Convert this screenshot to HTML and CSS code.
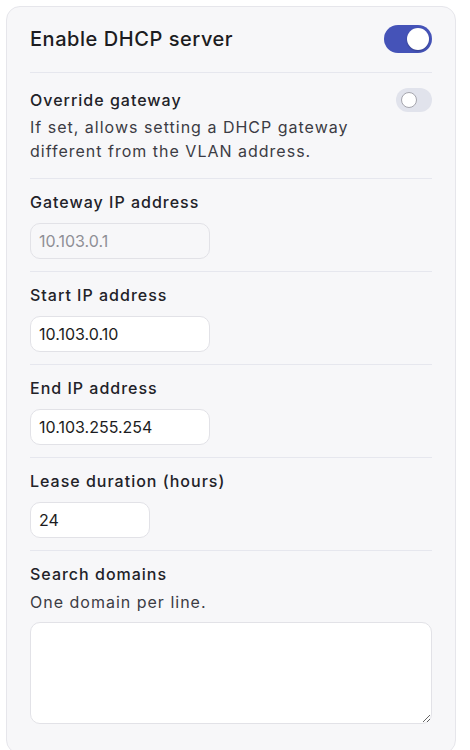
FILE: index.html
```html
<!DOCTYPE html>
<html lang="en">
<head>
    <meta charset="UTF-8">
    <meta name="viewport" content="width=device-width, initial-scale=1.0">
    <title>DHCP settings</title>
    <link rel="stylesheet" href="styles.css">
</head>
<body>
    <div class="card">
        <div class="row header">
            <span class="title">Enable DHCP server</span>
            <span class="toggle on"><span class="knob"></span></span>
        </div>
        <div class="row override">
            <div class="override-text">
                <div class="label">Override gateway</div>
                <div class="desc">If set, allows setting a DHCP gateway different from the VLAN address.</div>
            </div>
            <span class="toggle small"><span class="knob"></span></span>
        </div>
        <div class="row">
            <label class="label" for="gateway">Gateway IP address</label>
            <input type="text" id="gateway" class="field" value="10.103.0.1" disabled>
        </div>
        <div class="row">
            <label class="label" for="start">Start IP address</label>
            <input type="text" id="start" class="field" value="10.103.0.10">
        </div>
        <div class="row">
            <label class="label" for="end">End IP address</label>
            <input type="text" id="end" class="field" value="10.103.255.254">
        </div>
        <div class="row">
            <label class="label" for="lease">Lease duration (hours)</label>
            <input type="text" id="lease" class="field short" value="24">
        </div>
        <div class="row last">
            <label class="label" for="domains">Search domains</label>
            <div class="desc hint">One domain per line.</div>
            <textarea id="domains" class="area"></textarea>
        </div>
    </div>
</body>
</html>
```

FILE: styles.css
```css
body {
    margin: 0;
    padding: 6px;
    background-color: #ffffff;
    font-family: Inter, "Noto Sans", sans-serif;
    color: #1c1c21;
}
.card {
    width: 450px;
    box-sizing: border-box;
    padding: 0 23px 17px;
    background-color: #f7f7f9;
    border: 1px solid #e6e6eb;
    border-radius: 14px;
}
.row {
    padding: 11px 0 12px;
    border-top: 1px solid #e6e7ee;
}
.row.header {
    border-top: none;
    display: flex;
    justify-content: space-between;
    align-items: center;
    padding: 18px 0 19px;
}
.title {
    font-size: 20px;
    font-weight: 500;
    line-height: 28px;
    letter-spacing: 0.55px;
}
.row.override {
    display: flex;
    justify-content: space-between;
    align-items: flex-start;
    padding: 15px 0 15px;
}
.label {
    display: block;
    font-size: 16px;
    font-weight: 500;
    line-height: 24px;
    letter-spacing: 1px;
    color: #222228;
}
.desc {
    font-size: 16px;
    line-height: 24px;
    letter-spacing: 1px;
    color: #3c3c44;
    margin-top: 3px;
}
.override-text {
    width: 340px;
}
.hint {
    margin-top: 4px;
}
.toggle {
    position: relative;
    display: inline-block;
    width: 48px;
    height: 28px;
    border-radius: 14px;
    background-color: #e1e3ec;
    flex-shrink: 0;
}
.toggle.on {
    background-color: #4553b8;
}
.toggle .knob {
    position: absolute;
    top: 3px;
    left: 3px;
    width: 22px;
    height: 22px;
    border-radius: 50%;
    background-color: #ffffff;
    box-shadow: 0 1px 2px rgba(0, 0, 0, 0.25);
}
.toggle.on .knob {
    left: 23px;
}
.toggle.small {
    width: 36px;
    height: 24px;
    border-radius: 12px;
}
.toggle.small .knob {
    top: 4px;
    left: 5px;
    width: 14px;
    height: 14px;
    border: 1px solid #a6a6ae;
    box-shadow: none;
}
.field {
    display: block;
    margin-top: 9px;
    width: 180px;
    height: 36px;
    box-sizing: border-box;
    padding: 0 8px;
    border: 1px solid #e2e2e7;
    border-radius: 10px;
    background-color: #ffffff;
    font-family: Inter, "Noto Sans", sans-serif;
    font-size: 16px;
    color: #1c1c21;
    outline: 0;
}
.field:disabled {
    background-color: #f7f7f9;
    color: #8f8f96;
}
.field.short {
    width: 120px;
}
.area {
    display: block;
    margin-top: 8px;
    width: 100%;
    height: 102px;
    box-sizing: border-box;
    padding: 8px;
    border: 1px solid #e2e2e7;
    border-radius: 10px;
    background-color: #ffffff;
    font-family: Inter, "Noto Sans", sans-serif;
    font-size: 16px;
    outline: 0;
}
```
